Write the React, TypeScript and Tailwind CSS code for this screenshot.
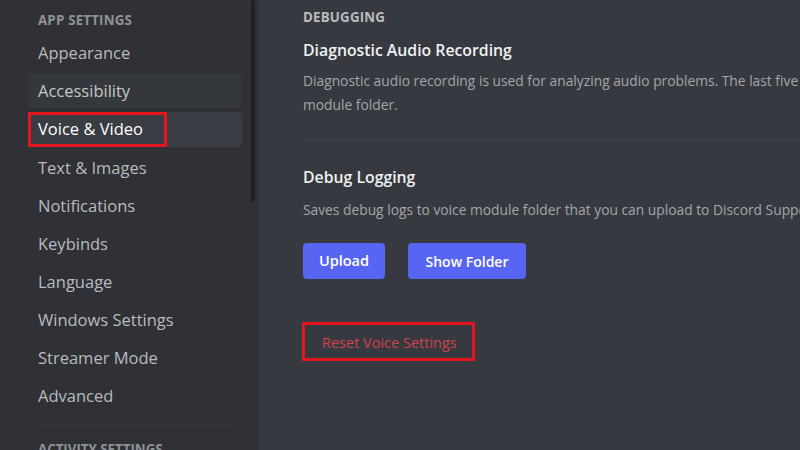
const items = [
  'Appearance',
  'Accessibility',
  'Voice & Video',
  'Text & Images',
  'Notifications',
  'Keybinds',
  'Language',
  'Windows Settings',
  'Streamer Mode',
  'Advanced',
]

function SideItem({ label }: { label: string }) {
  if (label === 'Voice & Video') {
    return (
      <div className="flex h-[35px] items-center rounded-[4px] bg-[#393c43] text-white">
        <span className="flex h-[35px] items-center border-[3px] border-[#e3151f] pl-[7px] pr-[21px]">{label}</span>
      </div>
    )
  }
  const hover = label === 'Accessibility'
  return (
    <div
      className={
        hover
          ? 'flex h-[34px] items-center rounded-[4px] bg-[#34373c] px-[10px] text-[#c5c7ca]'
          : 'flex h-[34px] items-center rounded-[4px] px-[10px] text-[#b9bbbe]'
      }
    >
      {label}
    </div>
  )
}

export default function App() {
  return (
    <div
      className="flex h-[450px] w-[800px] overflow-hidden bg-[#36393f]"
      style={{ fontFamily: '"Open Sans", "Noto Sans", sans-serif' }}
    >
      <aside className="flex w-[258px] shrink-0 bg-[#2f3136]">
        <nav className="ml-[28px] flex w-[214px] shrink-0 flex-col pt-[11px]">
          <div className="px-[10px] text-[13.3px] font-bold uppercase leading-[18px] tracking-[0.2px] text-[#8e9297]">
            App Settings
          </div>
          <div className="mt-[7px] flex flex-col gap-[4px] text-[16.5px]">
            {items.map((i) => (
              <SideItem key={i} label={i} />
            ))}
          </div>
          <div className="mx-[10px] mt-[12px] border-t border-[#3a3d42]" />
          <div className="mt-[14px] px-[10px] text-[13.3px] font-bold uppercase leading-[18px] text-[#8e9297]">
            Activity Settings
          </div>
        </nav>
        <div className="ml-auto mr-[3px] h-[202px] w-[4px] rounded-full bg-[#202225]" />
      </aside>

      <main className="min-w-0 flex-1 overflow-hidden pl-[45px] pt-[9px]">
        <div className="text-[13.3px] font-bold uppercase leading-[16px] tracking-[0.2px] text-[#b9bbbe]">
          Debugging
        </div>
        <div className="mt-[14px] text-[15.8px] font-semibold leading-[22px] text-[#f0f1f2]">
          Diagnostic Audio Recording
        </div>
        <div className="mt-[8px] text-[13.8px] leading-[24px] text-[#a3a6aa]">
          <div className="whitespace-nowrap">
            Diagnostic audio recording is used for analyzing audio problems. The last five recordings are stored in the voice
          </div>
          <div className="whitespace-nowrap">module folder.</div>
        </div>
        <div className="mt-[23px] border-t border-[#41444a]" />
        <div className="mt-[25px] text-[15.8px] font-semibold leading-[22px] text-[#f0f1f2]">Debug Logging</div>
        <div className="mt-[10px] whitespace-nowrap text-[13.8px] leading-[24px] text-[#a3a6aa]">
          Saves debug logs to voice module folder that you can upload to Discord Support for troubleshooting.
        </div>
        <div className="mt-[21px] flex gap-[23px]">
          <button className="h-[36px] w-[82px] rounded-[4px] bg-[#5865f2] text-[14.5px] font-semibold text-white">
            Upload
          </button>
          <button className="h-[36px] w-[118px] rounded-[4px] bg-[#5865f2] text-[14px] font-semibold text-white">
            Show Folder
          </button>
        </div>
        <div className="mt-[43px] -ml-[1px] inline-flex h-[39px] items-center border-[3px] border-[#e3151f] pl-[17px] pr-[15px] pt-[2px] text-[14.5px] text-[#cf424c]">
          Reset Voice Settings
        </div>
      </main>
    </div>
  )
}
